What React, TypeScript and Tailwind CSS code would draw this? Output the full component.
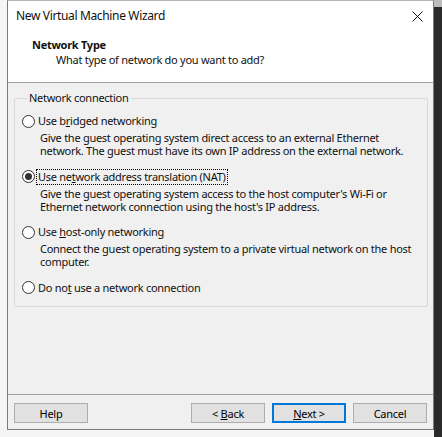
import React from 'react';

const options = [
    {
        label: <>Use b<u>r</u>idged networking</>,
        desc: ['Give the guest operating system direct access to an external Ethernet', 'network. The guest must have its own IP address on the external network.'],
        checked: false,
    },
    {
        label: <>Use ne<u>t</u>work address translation (NAT)</>,
        desc: ["Give the guest operating system access to the host computer's Wi-Fi or", "Ethernet network connection using the host's IP address."],
        checked: true,
    },
    {
        label: <>Use <u>h</u>ost-only networking</>,
        desc: ['Connect the guest operating system to a private virtual network on the host', 'computer.'],
        checked: false,
    },
    {
        label: <>Do no<u>t</u> use a network connection</>,
        desc: [],
        checked: false,
    },
];

const Radio: React.FC<{ checked: boolean }> = ({ checked }) => (
    <span className="w-[13px] h-[13px] rounded-full border border-[#333333] bg-white flex items-center justify-center shrink-0">
        {checked && <span className="w-[7px] h-[7px] rounded-full bg-[#333333]" />}
    </span>
);

const Button: React.FC<{ children: React.ReactNode; primary?: boolean }> = ({ children, primary }) => (
    <button
        className={
            'w-[74px] h-[20px] bg-[#e1e1e1] leading-none text-black flex items-center justify-center whitespace-pre ' +
            (primary ? 'border-2 border-[#0078d7]' : 'border border-[#adadad]')
        }
    >
        {children}
    </button>
);

export default function App() {
    return (
        <div className="w-[442px] h-[437px] flex overflow-hidden bg-[#f5f5f5] text-[#111] font-['Noto_Sans',sans-serif] text-[11px] tracking-[-0.27px] whitespace-nowrap">
            <div className="w-[7px] shrink-0" />

            {/* wizard window */}
            <div className="w-[427px] h-[430px] shrink-0 flex flex-col border-x border-b border-t border-[#7a7a7a] border-t-[#b5b5b5] bg-[#f0f0f0]">
                {/* title bar */}
                <div className="h-[30px] bg-white flex items-center justify-between pl-[8px] pr-[9px]">
                    <span className="leading-[14px] text-[12px] tracking-[-0.35px]">New Virtual Machine Wizard</span>
                    <svg width="11" height="11" viewBox="0 0 11 11" className="mr-[1px]">
                        <path d="M0.5 0.5 L10.5 10.5 M10.5 0.5 L0.5 10.5" stroke="#111" strokeWidth="1" />
                    </svg>
                </div>

                {/* header */}
                <div className="h-[52px] bg-white pl-[24px] pt-[7px] border-b border-[#a0a0a0]">
                    <div className="font-bold leading-[14px]">Network Type</div>
                    <div className="leading-[14px] mt-[1px] pl-[24px]">What type of network do you want to add?</div>
                </div>

                {/* body */}
                <div className="flex-1 pt-[8px] pl-[6px] pr-[5px]">
                    <fieldset className="border border-[#d9d9d9] rounded-[2px] pl-[7px] pb-[10px] pt-[8px]">
                        <legend className="ml-[5px] px-[2px] leading-[14px]">Network connection</legend>
                        <div className="flex flex-col gap-[11.5px]">
                            {options.map((opt, i) => (
                                <div key={i} className="flex flex-col">
                                    <div className="h-[16px] flex items-center">
                                        <Radio checked={opt.checked} />
                                        <span
                                            className={
                                                'ml-[2px] leading-[14px] px-[1px] ' +
                                                (opt.checked ? 'outline outline-1 outline-dotted outline-black' : '')
                                            }
                                        >
                                            {opt.label}
                                        </span>
                                    </div>
                                    {opt.desc.length > 0 && (
                                        <div className="mt-[2px] pl-[18px] leading-[13px]">
                                            {opt.desc.map((line, j) => (
                                                <div key={j}>{line}</div>
                                            ))}
                                        </div>
                                    )}
                                </div>
                            ))}
                        </div>
                    </fieldset>
                </div>

                {/* buttons */}
                <div className="h-[35px] border-t border-[#a0a0a0] flex justify-between items-start pt-[8px] px-[6px]">
                    <Button>Help</Button>
                    <div className="flex gap-[7px]">
                        <Button>{'< '}<u>B</u>ack</Button>
                        <Button primary><u>N</u>ext {'>'}</Button>
                        <Button>Cancel</Button>
                    </div>
                </div>
            </div>

            <div className="flex-1 flex flex-col">
                <div className="h-[7px] bg-[#bdbdbd]" />
                <div className="flex-1 bg-[#2b2b2b]" />
            </div>
        </div>
    );
}
